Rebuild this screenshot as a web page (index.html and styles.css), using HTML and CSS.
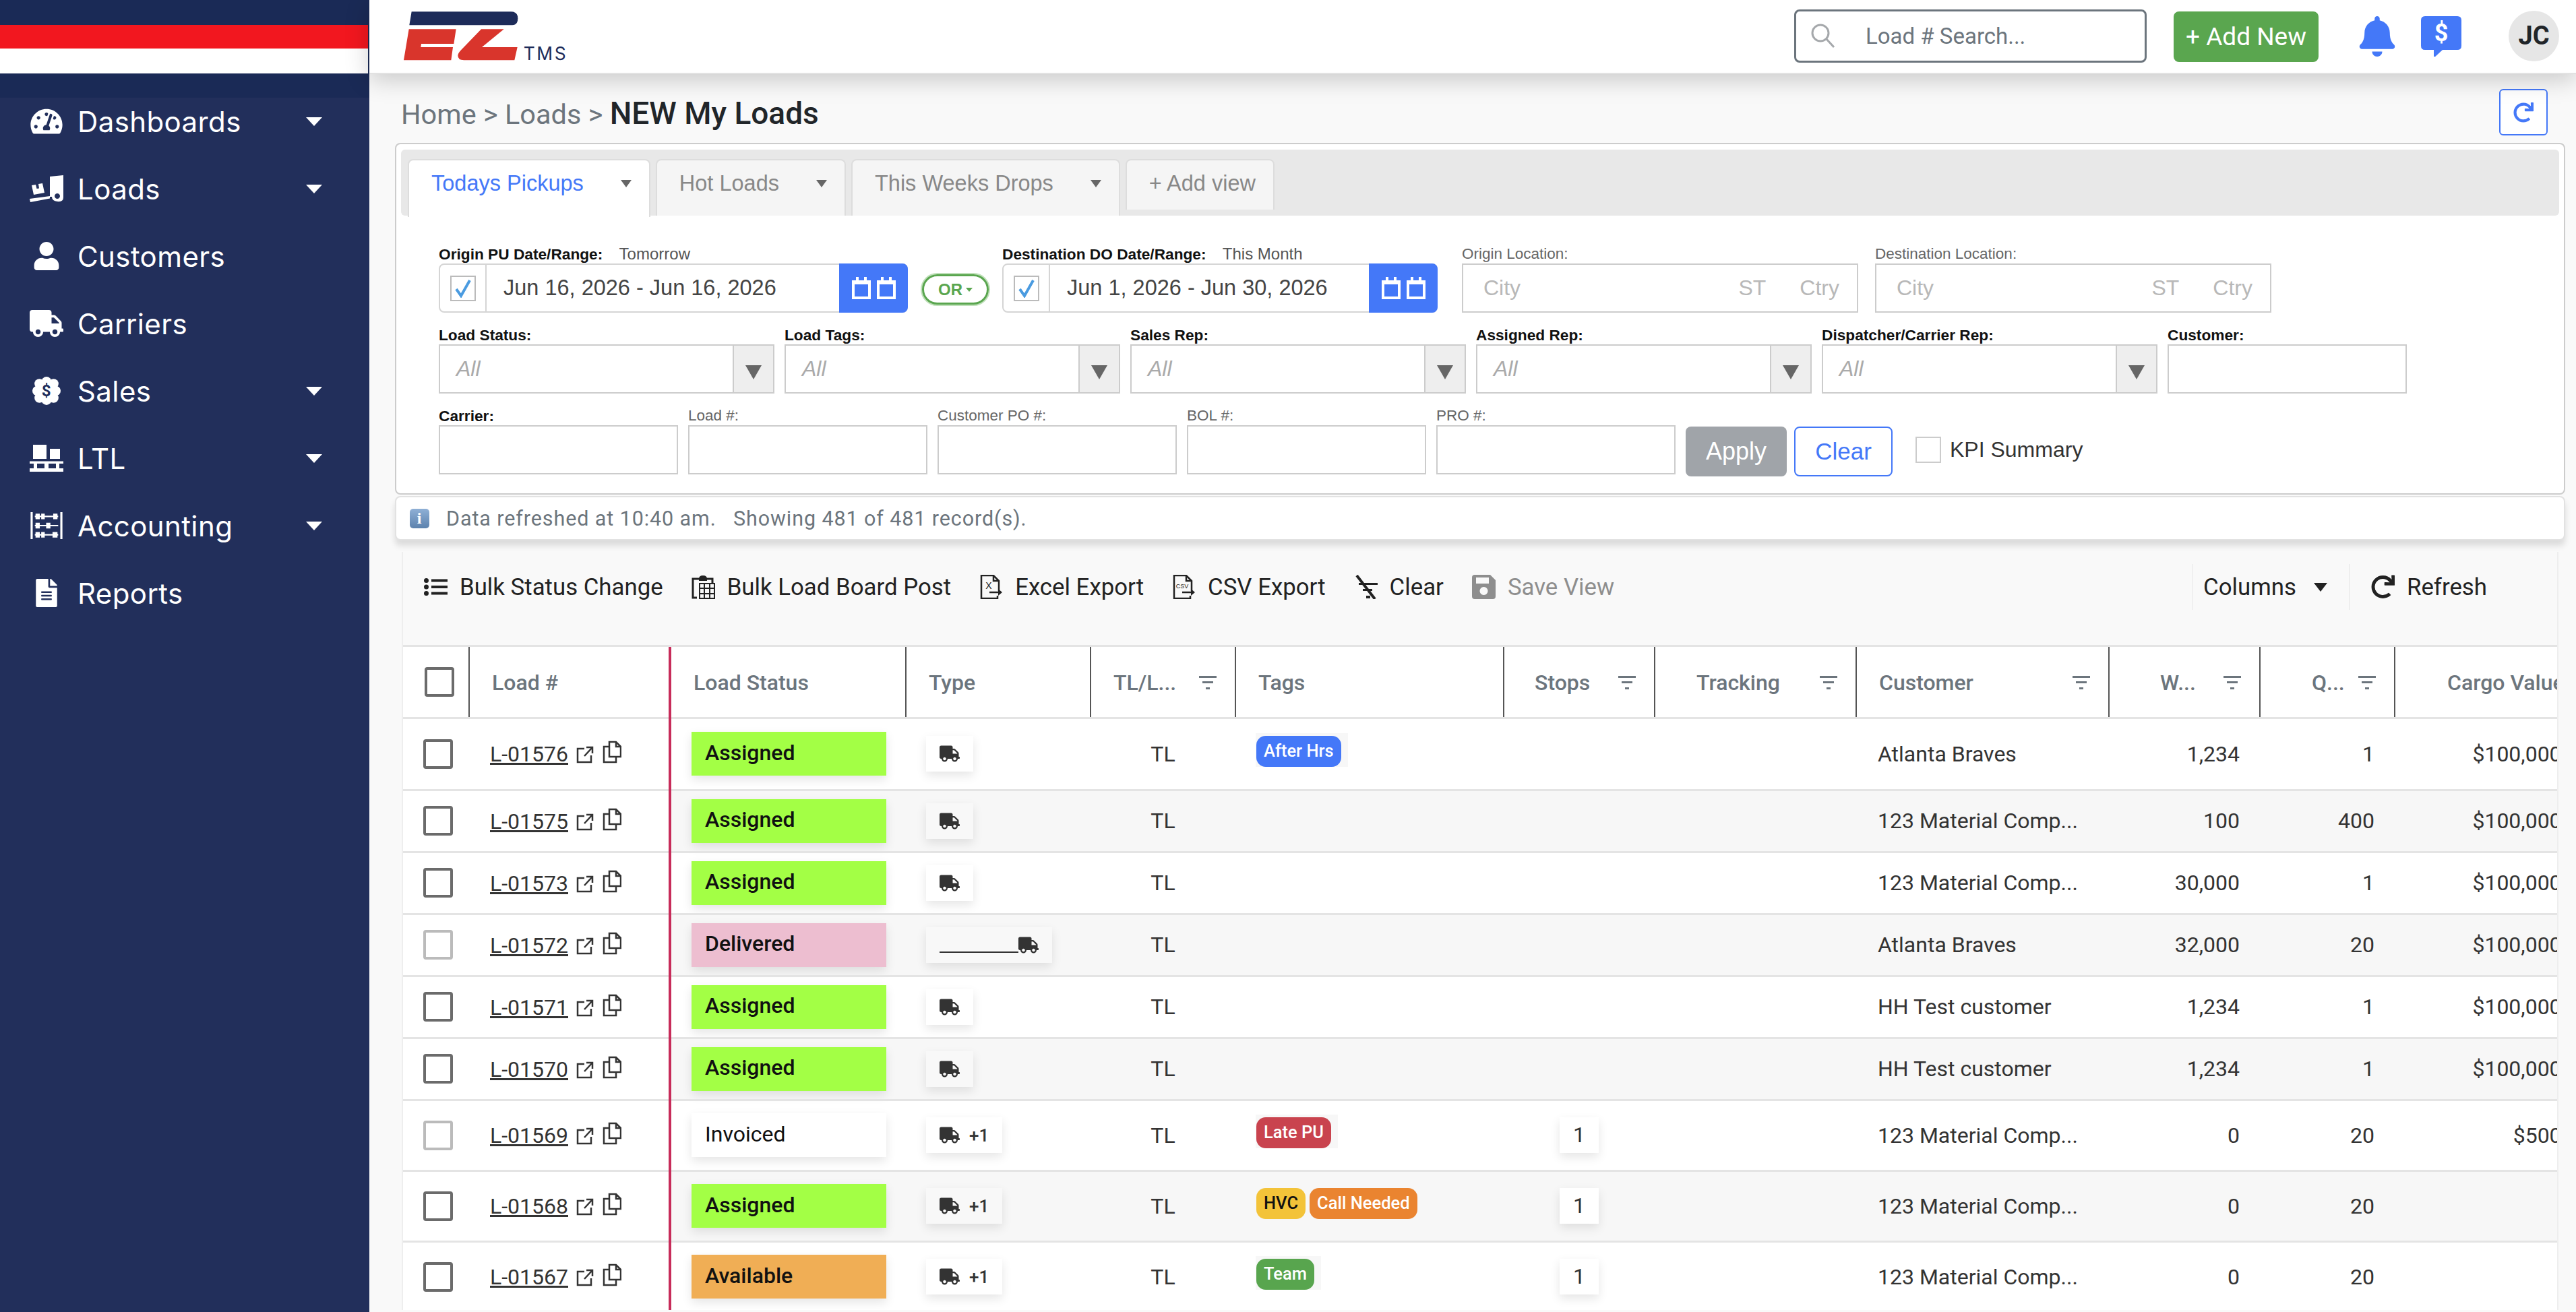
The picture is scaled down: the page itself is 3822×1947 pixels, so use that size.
FILE: index.html
```html
<!DOCTYPE html>
<html lang="en">
<head>
    <meta charset="UTF-8">
    <title>NEW My Loads</title>
    <link rel="stylesheet" href="styles.css">
</head>
<body>

<!-- shared icons -->
<svg class="sprite">
    <defs>
        <symbol id="i-gauge" viewBox="0 0 576 512"><path d="M288 32C128.94 32 0 160.94 0 320c0 52.8 14.25 102.26 39.06 144.8 5.61 9.62 16.3 15.2 27.44 15.2h443c11.14 0 21.83-5.58 27.44-15.2C561.75 422.26 576 372.8 576 320c0-159.06-128.94-288-288-288zm0 64c14.71 0 26.58 10.13 30.32 23.65-1.11 2.26-2.64 4.23-3.45 6.67l-9.22 27.67c-5.13 3.49-10.97 6.01-17.64 6.01-17.67 0-32-14.33-32-32S270.33 96 288 96zM96 384c-17.67 0-32-14.33-32-32s14.33-32 32-32 32 14.33 32 32-14.33 32-32 32zm48-160c-17.67 0-32-14.33-32-32s14.33-32 32-32 32 14.33 32 32-14.33 32-32 32zm246.77-72.41l-61.33 184C343.13 347.33 352 364.54 352 384c0 11.72-3.38 22.55-8.88 32H232.88c-5.5-9.45-8.88-20.28-8.88-32 0-33.94 26.5-61.43 59.9-63.59l61.34-184.01c4.17-12.56 17.73-19.45 30.36-15.17 12.57 4.19 19.35 17.79 15.17 30.36zm14.66 57.2l15.52-46.55c3.47-1.29 7.13-2.23 11.05-2.23 17.67 0 32 14.33 32 32s-14.33 32-32 32c-11.38-.01-20.89-6.28-26.57-15.22zM480 384c-17.67 0-32-14.33-32-32s14.33-32 32-32 32 14.33 32 32-14.33 32-32 32z"/></symbol>
        <symbol id="i-dolly" viewBox="0 0 50 40"><path fill-rule="evenodd" d="M30 2L50 0V33Q50 40 41 39Q33 38 33 32L30 32ZM41 27a4 4 0 1 0 .01 0Z"/><path d="M0 35L30 31V34.5L1 40Z"/><path d="M3 15L9 14L10.5 20L14 19.5L13 13L19 12L22 26L6 29Z"/></symbol>
        <symbol id="i-user" viewBox="0 0 448 512"><path d="M224 256c70.7 0 128-57.3 128-128S294.7 0 224 0 96 57.3 96 128s57.3 128 128 128zm89.6 32h-16.7c-22.2 10.2-46.9 16-72.9 16s-50.6-5.8-72.9-16h-16.7C60.2 288 0 348.2 0 422.4V464c0 26.5 21.5 48 48 48h352c26.5 0 48-21.5 48-48v-41.6c0-74.2-60.2-134.4-134.4-134.4z"/></symbol>
        <symbol id="i-truck" viewBox="0 0 640 512"><path d="M624 352h-16V243.9c0-12.7-5.1-24.9-14.1-33.9L494 110.1c-9-9-21.2-14.1-33.9-14.1H416V48c0-26.5-21.5-48-48-48H48C21.5 0 0 21.5 0 48v320c0 26.5 21.5 48 48 48h16c0 53 43 96 96 96s96-43 96-96h128c0 53 43 96 96 96s96-43 96-96h48c8.8 0 16-7.2 16-16v-32c0-8.8-7.2-16-16-16zM160 464c-26.5 0-48-21.5-48-48s21.5-48 48-48 48 21.5 48 48-21.5 48-48 48zm320 0c-26.5 0-48-21.5-48-48s21.5-48 48-48 48 21.5 48 48-21.5 48-48 48zm80-208H416V144h44.1l99.9 99.9V256z"/></symbol>
        <symbol id="i-pallet" viewBox="0 0 50 40"><path d="M5 0H25V21H5ZM30 6H45V21H30ZM0 24.5H50V28H0ZM0 35H50V40H0ZM6 28H11V35H6ZM22 28H28V35H22ZM39 28H44V35H39Z"/></symbol>
        <symbol id="i-abacus" viewBox="0 0 45 40"><path d="M0 1H3V39H0ZM42 1H45V39H42ZM6 6H39V8H6ZM6 19H39V21H6ZM6 32H39V34H6ZM7 3H13V11H7ZM15 3H20V11H15ZM32 3H38V11H32ZM7 16H13V24H7ZM22 16H28V24H22ZM7 29H13V37H7ZM15 29H20V37H15ZM31 29H38V37H31Z"/></symbol>
        <symbol id="i-file" viewBox="0 0 384 512"><path d="M224 136V0H24C10.7 0 0 10.7 0 24v464c0 13.3 10.7 24 24 24h336c13.3 0 24-10.7 24-24V160H248c-13.2 0-24-10.8-24-24zm64 236c0 6.6-5.4 12-12 12H108c-6.6 0-12-5.4-12-12v-8c0-6.6 5.4-12 12-12h168c6.6 0 12 5.4 12 12v8zm0-64c0 6.6-5.4 12-12 12H108c-6.6 0-12-5.4-12-12v-8c0-6.6 5.4-12 12-12h168c6.6 0 12 5.4 12 12v8zm0-72v8c0 6.6-5.4 12-12 12H108c-6.6 0-12-5.4-12-12v-8c0-6.6 5.4-12 12-12h168c6.6 0 12 5.4 12 12zm96-114.1v6.1H256V0h6.1c6.4 0 12.5 2.5 17 7l97.9 98c4.5 4.5 7 10.6 7 16.9z"/></symbol>
        <symbol id="i-redo" viewBox="0 0 512 512"><path d="M500.33 0h-47.41a12 12 0 0 0-12 12.57l4 82.76A247.42 247.42 0 0 0 256 8C119.34 8 7.9 119.53 8 256.19 8.1 393.07 119.1 504 256 504a247.1 247.1 0 0 0 166.18-63.91 12 12 0 0 0 .48-17.43l-34-34a12 12 0 0 0-16.38-.55A176 176 0 1 1 402.1 157.8l-101.53-4.87a12 12 0 0 0-12.57 12v47.41a12 12 0 0 0 12 12h200.33a12 12 0 0 0 12-12V12a12 12 0 0 0-12-12z"/></symbol>
        <symbol id="i-cal" viewBox="0 0 28 33"><path fill="none" stroke="#fff" stroke-width="4" d="M2 7H26V31H2Z"/><path fill="#fff" d="M6 0H10V7H6ZM18 0H22V7H18ZM0 5H28V11H0Z"/></symbol>
        <symbol id="i-check" viewBox="0 0 24 28"><path fill="none" stroke="#4a9be0" stroke-width="4" d="M2 15L9 25L22 2"/></symbol>
        <symbol id="i-ext" viewBox="0 0 26 26"><path fill="none" stroke="#333" stroke-width="2.5" d="M12 4H2V24H22V14M12 15L24 2M15 2H24V11"/></symbol>
        <symbol id="i-copy" viewBox="0 0 28 34"><path fill="none" stroke="#333" stroke-width="2.5" d="M10 2H20L27 9V24H10ZM20 2V9H27M10 9H2V32H20V24"/></symbol>
        <symbol id="i-filter" viewBox="0 0 26 20"><path d="M0 0H26V3H0ZM5 8H21V11H5ZM10 17H16V20H10Z"/></symbol>
    </defs>
</svg>

<aside class="sidebar">
    <div class="brand-strip">
        <div class="stripe-red"></div>
        <div class="stripe-white"></div>
    </div>
    <nav class="side-nav">
        <a class="nav-item"><svg class="nav-icon"><use href="#i-gauge"/></svg><span>Dashboards</span><i class="nav-caret"></i></a>
        <a class="nav-item"><svg class="nav-icon"><use href="#i-dolly"/></svg><span>Loads</span><i class="nav-caret"></i></a>
        <a class="nav-item"><svg class="nav-icon nav-icon-sm"><use href="#i-user"/></svg><span>Customers</span></a>
        <a class="nav-item"><svg class="nav-icon"><use href="#i-truck"/></svg><span>Carriers</span></a>
        <a class="nav-item">
            <svg class="nav-icon nav-icon-sm" viewBox="0 0 40 40">
                <circle cx="20" cy="7" r="7"/><circle cx="20" cy="33" r="7"/><circle cx="7" cy="20" r="7"/><circle cx="33" cy="20" r="7"/>
                <circle cx="10" cy="10" r="7"/><circle cx="30" cy="10" r="7"/><circle cx="10" cy="30" r="7"/><circle cx="30" cy="30" r="7"/><circle cx="20" cy="20" r="12"/>
                <text class="badge-dollar" x="20" y="28">$</text>
            </svg>
            <span>Sales</span><i class="nav-caret"></i>
        </a>
        <a class="nav-item"><svg class="nav-icon"><use href="#i-pallet"/></svg><span>LTL</span><i class="nav-caret"></i></a>
        <a class="nav-item"><svg class="nav-icon"><use href="#i-abacus"/></svg><span>Accounting</span><i class="nav-caret"></i></a>
        <a class="nav-item"><svg class="nav-icon nav-icon-sm"><use href="#i-file"/></svg><span>Reports</span></a>
    </nav>
</aside>

<main class="main">
    <header class="topbar">
        <svg class="logo" viewBox="0 0 840 300">
            <path fill="#1d2b59" d="M62 37H505Q535 37 535 67T510 97H52Z"/>
            <path fill="#d9352c" d="M50 115H260L250 180H105L103 195H246L238 253H27Z"/>
            <path fill="#d9352c" d="M372 115H473L375 195H533L520 253H295Q268 253 268 232Q268 222 285 205Z"/>
            <text class="logo-tms" x="560" y="253">TMS</text>
        </svg>
        <div class="search-box">
            <svg class="search-icon" viewBox="0 0 36 36"><circle cx="14" cy="14" r="12"/><path d="M23 23L34 35"/></svg>
            <span>Load # Search...</span>
        </div>
        <button class="btn-add">+ Add New</button>
        <svg class="top-icon bell" viewBox="0 0 448 512"><path d="M224 512c35.32 0 63.97-28.65 63.97-64H160.03c0 35.35 28.65 64 63.97 64zm215.39-149.71c-19.32-20.76-55.47-51.99-55.47-154.29 0-77.7-54.48-139.9-127.94-155.16V32c0-17.67-14.32-32-31.98-32s-31.98 14.33-31.98 32v20.84C118.56 68.1 64.08 130.3 64.08 208c0 102.3-36.15 133.53-55.47 154.29-6 6.45-8.66 14.16-8.61 21.71.11 16.4 12.98 32 32.1 32h383.8c19.12 0 32-15.6 32.1-32 .05-7.55-2.61-15.27-8.61-21.71z"/></svg>
        <svg class="top-icon chat" viewBox="0 0 60 60">
            <path d="M6 0H54Q60 0 60 6V44Q60 50 54 50H32L19 62V50H6Q0 50 0 44V6Q0 0 6 0Z"/>
            <text class="chat-dollar" x="30" y="37">$</text>
        </svg>
        <div class="avatar">JC</div>
    </header>

    <div class="content">
        <div class="page-head">
            <div class="crumbs">Home &gt; Loads &gt; <strong>NEW My Loads</strong></div>
            <button class="btn-refresh"><svg><use href="#i-redo"/></svg></button>
        </div>

        <section class="filter-panel">
            <div class="tabs">
                <div class="tab active">Todays Pickups<i class="tab-caret"></i></div>
                <div class="tab">Hot Loads<i class="tab-caret"></i></div>
                <div class="tab">This Weeks Drops<i class="tab-caret"></i></div>
                <div class="tab tab-add">+ Add view</div>
            </div>

            <div class="filter-rows">
                <div class="filter-row">
                    <div class="field w-date1">
                        <label class="lbl strong">Origin PU Date/Range: <em>Tomorrow</em></label>
                        <div class="date-group">
                            <div class="date-check"><span class="check-box"><svg><use href="#i-check"/></svg></span></div>
                            <div class="date-text">Jun 16, 2026 - Jun 16, 2026</div>
                            <div class="date-btn"><svg><use href="#i-cal"/></svg><svg><use href="#i-cal"/></svg></div>
                        </div>
                    </div>
                    <div class="or-pill">OR<i></i></div>
                    <div class="field w-date2">
                        <label class="lbl strong">Destination DO Date/Range: <em>This Month</em></label>
                        <div class="date-group">
                            <div class="date-check"><span class="check-box"><svg><use href="#i-check"/></svg></span></div>
                            <div class="date-text">Jun 1, 2026 - Jun 30, 2026</div>
                            <div class="date-btn"><svg><use href="#i-cal"/></svg><svg><use href="#i-cal"/></svg></div>
                        </div>
                    </div>
                    <div class="field w-loc loc-first">
                        <label class="lbl">Origin Location:</label>
                        <div class="ctrl loc-ctrl"><span class="loc-city">City</span><span class="loc-st">ST</span><span>Ctry</span></div>
                    </div>
                    <div class="field w-loc loc-second">
                        <label class="lbl">Destination Location:</label>
                        <div class="ctrl loc-ctrl"><span class="loc-city">City</span><span class="loc-st">ST</span><span>Ctry</span></div>
                    </div>
                </div>

                <div class="filter-row gap-15">
                    <div class="field w-select"><label class="lbl strong">Load Status:</label><div class="ctrl select-ctrl"><span>All</span><b></b></div></div>
                    <div class="field w-select"><label class="lbl strong">Load Tags:</label><div class="ctrl select-ctrl"><span>All</span><b></b></div></div>
                    <div class="field w-select"><label class="lbl strong">Sales Rep:</label><div class="ctrl select-ctrl"><span>All</span><b></b></div></div>
                    <div class="field w-select"><label class="lbl strong">Assigned Rep:</label><div class="ctrl select-ctrl"><span>All</span><b></b></div></div>
                    <div class="field w-select"><label class="lbl strong">Dispatcher/Carrier Rep:</label><div class="ctrl select-ctrl"><span>All</span><b></b></div></div>
                    <div class="field w-input"><label class="lbl strong">Customer:</label><div class="ctrl"></div></div>
                </div>

                <div class="filter-row gap-15">
                    <div class="field w-input"><label class="lbl strong">Carrier:</label><div class="ctrl"></div></div>
                    <div class="field w-input"><label class="lbl">Load #:</label><div class="ctrl"></div></div>
                    <div class="field w-input"><label class="lbl">Customer PO #:</label><div class="ctrl"></div></div>
                    <div class="field w-input"><label class="lbl">BOL #:</label><div class="ctrl"></div></div>
                    <div class="field w-input"><label class="lbl">PRO #:</label><div class="ctrl"></div></div>
                    <button class="btn-apply">Apply</button>
                    <button class="btn-clear">Clear</button>
                    <div class="kpi"><span class="kpi-box"></span>KPI Summary</div>
                </div>
            </div>
        </section>

        <div class="info-bar">
            <span class="info-icon">i</span>
            <span>Data refreshed at 10:40 am. &nbsp; Showing 481 of 481 record(s).</span>
        </div>

        <section class="grid-panel">
            <div class="toolbar">
                <a class="tool">
                    <svg class="tool-icon" viewBox="0 0 35 26"><circle cx="3.5" cy="3.5" r="3.5"/><circle cx="3.5" cy="13" r="3.5"/><circle cx="3.5" cy="22.5" r="3.5"/><path d="M11 1.5H35V5.5H11ZM11 11H35V15H11ZM11 20.5H35V24.5H11Z"/></svg>
                    Bulk Status Change
                </a>
                <a class="tool">
                    <svg class="tool-icon" viewBox="0 0 35 36"><path fill="none" stroke="#222" stroke-width="3" d="M8 34H2V6H31V12"/><path d="M11 6Q11 1 17 1T23 6V9H11Z"/><path fill="none" stroke="#222" stroke-width="2" d="M12 13H34V35H12ZM19 13V35M27 13V35M12 20H34M12 28H34"/></svg>
                    Bulk Load Board Post
                </a>
                <a class="tool">
                    <svg class="tool-icon" viewBox="0 0 33 36"><path fill="none" stroke="#222" stroke-width="2.5" d="M28 24V9L20 1H2V35H26V31M20 1V9H28M14 26H31"/><path d="M33 26L27 21V31Z"/><text class="file-tag x-tag" x="13" y="21">X</text></svg>
                    Excel Export
                </a>
                <a class="tool">
                    <svg class="tool-icon" viewBox="0 0 33 36"><path fill="none" stroke="#222" stroke-width="2.5" d="M28 24V9L20 1H2V35H26V31M20 1V9H28M14 26H31"/><path d="M33 26L27 21V31Z"/><text class="file-tag" x="14" y="20">CSV</text></svg>
                    CSV Export
                </a>
                <a class="tool">
                    <svg class="tool-icon" viewBox="0 0 35 36"><path d="M7 12H35V15H7ZM13 21H27V24H13ZM18 31H24V35H18Z"/><path fill="none" stroke="#222" stroke-width="4" d="M4 1L31 36"/></svg>
                    Clear
                </a>
                <a class="tool tool-off">
                    <svg class="tool-icon" viewBox="0 0 35 36"><path fill="#8e8e8e" fill-rule="evenodd" d="M4 0H27L35 8V32Q35 36 31 36H4Q0 36 0 32V4Q0 0 4 0ZM6 4V13H25V4ZM17.5 18a6 6 0 1 0 .01 0Z"/></svg>
                    Save View
                </a>
                <div class="tool-right">
                    <a class="tool tool-columns">Columns<i class="columns-caret"></i></a>
                    <a class="tool tool-refresh"><svg class="tool-icon"><use href="#i-redo"/></svg>Refresh</a>
                </div>
            </div>

            <div class="table-clip">
                <table class="loads">
                    <colgroup>
                        <col class="c-check"><col class="c-load"><col class="c-status"><col class="c-type"><col class="c-tl"><col class="c-tags"><col class="c-stops"><col class="c-track"><col class="c-cust"><col class="c-w"><col class="c-q"><col class="c-cargo">
                    </colgroup>
                    <thead>
                        <tr>
                            <th class="cell-check"><span class="cb head-cb"></span></th>
                            <th class="frozen"><div class="th">Load #</div></th>
                            <th><div class="th">Load Status</div></th>
                            <th><div class="th">Type</div></th>
                            <th><div class="th">TL/L...<svg><use href="#i-filter"/></svg></div></th>
                            <th><div class="th">Tags</div></th>
                            <th><div class="th th-stops">Stops<svg><use href="#i-filter"/></svg></div></th>
                            <th><div class="th th-track">Tracking<svg><use href="#i-filter"/></svg></div></th>
                            <th><div class="th">Customer<svg><use href="#i-filter"/></svg></div></th>
                            <th><div class="th th-w">W...<svg><use href="#i-filter"/></svg></div></th>
                            <th><div class="th th-q">Q...<svg><use href="#i-filter"/></svg></div></th>
                            <th><div class="th th-cargo">Cargo Value</div></th>
                        </tr>
                    </thead>
                    <tbody>
                        <tr class="row-tall row-first">
                            <td class="cell-check"><span class="cb"></span></td>
                            <td class="frozen"><a class="load-no">L-01576</a><svg class="ic-ext"><use href="#i-ext"/></svg><svg class="ic-copy"><use href="#i-copy"/></svg></td>
                            <td><div class="status st-assigned">Assigned</div></td>
                            <td><span class="chip"><svg><use href="#i-truck"/></svg></span></td>
                            <td class="center">TL</td>
                            <td><div class="tags"><span class="tag tag-blue">After Hrs</span></div></td>
                            <td></td><td></td>
                            <td>Atlanta Braves</td>
                            <td class="right">1,234</td><td class="right">1</td><td class="right">$100,000.00</td>
                        </tr>
                        <tr>
                            <td class="cell-check"><span class="cb"></span></td>
                            <td class="frozen"><a class="load-no">L-01575</a><svg class="ic-ext"><use href="#i-ext"/></svg><svg class="ic-copy"><use href="#i-copy"/></svg></td>
                            <td><div class="status st-assigned">Assigned</div></td>
                            <td><span class="chip"><svg><use href="#i-truck"/></svg></span></td>
                            <td class="center">TL</td>
                            <td></td><td></td><td></td>
                            <td>123 Material Comp...</td>
                            <td class="right">100</td><td class="right">400</td><td class="right">$100,000.00</td>
                        </tr>
                        <tr>
                            <td class="cell-check"><span class="cb"></span></td>
                            <td class="frozen"><a class="load-no">L-01573</a><svg class="ic-ext"><use href="#i-ext"/></svg><svg class="ic-copy"><use href="#i-copy"/></svg></td>
                            <td><div class="status st-assigned">Assigned</div></td>
                            <td><span class="chip"><svg><use href="#i-truck"/></svg></span></td>
                            <td class="center">TL</td>
                            <td></td><td></td><td></td>
                            <td>123 Material Comp...</td>
                            <td class="right">30,000</td><td class="right">1</td><td class="right">$100,000.00</td>
                        </tr>
                        <tr>
                            <td class="cell-check"><span class="cb cb-off"></span></td>
                            <td class="frozen"><a class="load-no">L-01572</a><svg class="ic-ext"><use href="#i-ext"/></svg><svg class="ic-copy"><use href="#i-copy"/></svg></td>
                            <td><div class="status st-delivered">Delivered</div></td>
                            <td><span class="chip"><i class="chip-line"></i><svg><use href="#i-truck"/></svg></span></td>
                            <td class="center">TL</td>
                            <td></td><td></td><td></td>
                            <td>Atlanta Braves</td>
                            <td class="right">32,000</td><td class="right">20</td><td class="right">$100,000.00</td>
                        </tr>
                        <tr>
                            <td class="cell-check"><span class="cb"></span></td>
                            <td class="frozen"><a class="load-no">L-01571</a><svg class="ic-ext"><use href="#i-ext"/></svg><svg class="ic-copy"><use href="#i-copy"/></svg></td>
                            <td><div class="status st-assigned">Assigned</div></td>
                            <td><span class="chip"><svg><use href="#i-truck"/></svg></span></td>
                            <td class="center">TL</td>
                            <td></td><td></td><td></td>
                            <td>HH Test customer</td>
                            <td class="right">1,234</td><td class="right">1</td><td class="right">$100,000.00</td>
                        </tr>
                        <tr>
                            <td class="cell-check"><span class="cb"></span></td>
                            <td class="frozen"><a class="load-no">L-01570</a><svg class="ic-ext"><use href="#i-ext"/></svg><svg class="ic-copy"><use href="#i-copy"/></svg></td>
                            <td><div class="status st-assigned">Assigned</div></td>
                            <td><span class="chip"><svg><use href="#i-truck"/></svg></span></td>
                            <td class="center">TL</td>
                            <td></td><td></td><td></td>
                            <td>HH Test customer</td>
                            <td class="right">1,234</td><td class="right">1</td><td class="right">$100,000.00</td>
                        </tr>
                        <tr class="row-tall">
                            <td class="cell-check"><span class="cb cb-off"></span></td>
                            <td class="frozen"><a class="load-no">L-01569</a><svg class="ic-ext"><use href="#i-ext"/></svg><svg class="ic-copy"><use href="#i-copy"/></svg></td>
                            <td><div class="status st-invoiced">Invoiced</div></td>
                            <td><span class="chip"><svg><use href="#i-truck"/></svg><b>+1</b></span></td>
                            <td class="center">TL</td>
                            <td><div class="tags"><span class="tag tag-red">Late PU</span></div></td>
                            <td class="center"><span class="stop-chip">1</span></td><td></td>
                            <td>123 Material Comp...</td>
                            <td class="right">0</td><td class="right">20</td><td class="right">$500.00</td>
                        </tr>
                        <tr class="row-tall">
                            <td class="cell-check"><span class="cb"></span></td>
                            <td class="frozen"><a class="load-no">L-01568</a><svg class="ic-ext"><use href="#i-ext"/></svg><svg class="ic-copy"><use href="#i-copy"/></svg></td>
                            <td><div class="status st-assigned">Assigned</div></td>
                            <td><span class="chip"><svg><use href="#i-truck"/></svg><b>+1</b></span></td>
                            <td class="center">TL</td>
                            <td><div class="tags"><span class="tag tag-yellow">HVC</span><span class="tag tag-orange">Call Needed</span></div></td>
                            <td class="center"><span class="stop-chip">1</span></td><td></td>
                            <td>123 Material Comp...</td>
                            <td class="right">0</td><td class="right">20</td><td class="right"></td>
                        </tr>
                        <tr class="row-tall">
                            <td class="cell-check"><span class="cb"></span></td>
                            <td class="frozen"><a class="load-no">L-01567</a><svg class="ic-ext"><use href="#i-ext"/></svg><svg class="ic-copy"><use href="#i-copy"/></svg></td>
                            <td><div class="status st-available">Available</div></td>
                            <td><span class="chip"><svg><use href="#i-truck"/></svg><b>+1</b></span></td>
                            <td class="center">TL</td>
                            <td><div class="tags"><span class="tag tag-green">Team</span></div></td>
                            <td class="center"><span class="stop-chip">1</span></td><td></td>
                            <td>123 Material Comp...</td>
                            <td class="right">0</td><td class="right">20</td><td class="right"></td>
                        </tr>
                    </tbody>
                </table>
            </div>
        </section>
    </div>
</main>

</body>
</html>
```

FILE: styles.css
```css
/* EZ TMS loads board */
* {
    box-sizing: border-box;
}
body {
    display: flex;
    height: 100vh;
    margin: 0;
    overflow: hidden;
    font-family: Roboto, sans-serif;
    font-size: 32px;
    color: #333;
    background-color: #f9f9f9;
}
.sprite {
    display: none;
}
button {
    font: inherit;
    cursor: pointer;
}

/* sidebar */
.sidebar {
    flex: none;
    width: 548px;
    background-color: #222f5b;
}
.brand-strip {
    height: 145px;
    padding: 37px 2px 36px 0;
    background-color: #1a2a56;
}
.stripe-red {
    height: 35px;
    background-color: #f2171f;
}
.stripe-white {
    height: 37px;
    background-color: #fff;
}
.side-nav {
    margin-top: -15px;
}
.nav-item {
    display: flex;
    align-items: center;
    height: 100px;
    padding: 0 70px 0 44px;
    color: #fff;
    font-family: Inter, sans-serif;
    font-size: 42px;
    letter-spacing: 0.4px;
}
.nav-icon {
    flex: none;
    width: 50px;
    height: 42px;
    margin-right: 21px;
    fill: #fff;
}
.nav-caret {
    margin-left: auto;
    border-left: 12px solid transparent;
    border-right: 12px solid transparent;
    border-top: 13px solid #fff;
}
.badge-dollar {
    font: 700 23px Roboto, sans-serif;
    text-anchor: middle;
    fill: #222f5b;
}

/* top bar */
.main {
    flex: 1;
    min-width: 0;
    display: flex;
    flex-direction: column;
}
.topbar {
    position: relative;
    z-index: 2;
    flex: none;
    display: flex;
    align-items: center;
    height: 110px;
    padding-left: 42px;
    background-color: #fff;
    border-bottom: 2px solid #e2e2e2;
    box-shadow: 0 8px 34px rgba(0, 0, 0, 0.2);
}
.logo {
    flex: none;
    width: 280px;
    height: 100px;
    margin-top: 2px;
    margin-right: auto;
}
.logo-tms {
    font: 400 79px Inter, sans-serif;
    fill: #1d2b59;
    letter-spacing: 8px;
}
.search-box {
    display: flex;
    align-items: center;
    width: 523px;
    height: 79px;
    margin-bottom: 2px;
    padding-left: 22px;
    border: 3px solid #6c757d;
    border-radius: 8px;
    font-size: 33px;
    color: #6c757d;
}
.search-icon {
    width: 36px;
    height: 36px;
    margin-right: 45px;
    fill: none;
    stroke: #a5a8ab;
    stroke-width: 3;
}
.btn-add {
    width: 215px;
    height: 75px;
    margin: 0 57px 0 40px;
    padding: 0;
    border: none;
    border-radius: 8px;
    font-size: 37px;
    color: #fff;
    background-color: #5aa64f;
}
.top-icon {
    flex: none;
    width: 60px;
    height: 60px;
    fill: #4478f8;
}
.bell {
    margin-right: 35px;
}
.chat-dollar {
    font: 700 36px Roboto, sans-serif;
    text-anchor: middle;
    fill: #fff;
}
.avatar {
    display: flex;
    align-items: center;
    justify-content: center;
    width: 75px;
    height: 75px;
    margin: 0 25px 2px 70px;
    border-radius: 50%;
    font-size: 38px;
    font-weight: 700;
    color: #212529;
    background-color: #e6e6e6;
}

/* page heading */
.content {
    flex: 1;
    min-height: 0;
    display: flex;
    flex-direction: column;
    padding: 0 16px 3px 38px;
}
.page-head {
    flex: none;
    display: flex;
    align-items: center;
    justify-content: space-between;
    height: 102px;
    padding: 22px 26px 11px 9px;
}
.crumbs {
    padding-top: 3px;
    font-size: 41.5px;
    color: #6c757d;
}
.crumbs strong {
    font-size: 46px;
    font-weight: 500;
    color: #212529;
}
.btn-refresh {
    display: flex;
    align-items: center;
    justify-content: center;
    width: 72px;
    height: 69px;
    padding: 0;
    border: 2px solid #4478f8;
    border-radius: 6px;
    background-color: #fff;
}
.btn-refresh svg {
    width: 30px;
    height: 32px;
    fill: #4478f8;
}

/* filter panel */
.filter-panel {
    flex: none;
    height: 522px;
    border: 2px solid #ccc;
    border-radius: 8px;
    font-family: "Liberation Sans", Arial, sans-serif;
    background-color: #fff;
}
.tabs {
    display: flex;
    gap: 8px;
    height: 98px;
    margin: 8px 7px 0;
    padding: 14px 0 0 10px;
    border-radius: 6px;
    font-size: 32.5px;
    background-color: #e8e8e8;
}
.tab {
    display: flex;
    align-items: center;
    gap: 55px;
    height: 84px;
    padding: 0 26px 14px 33px;
    border: 2px solid #ddd;
    border-bottom: none;
    border-radius: 8px 8px 0 0;
    color: #888;
    background-color: #f5f5f5;
}
.tab.active {
    height: 86px;
    padding-bottom: 16px;
    color: #4478f8;
    background-color: #fff;
}
.tab-add {
    height: 75px;
    padding-bottom: 5px;
}
.tab-caret {
    border-left: 8px solid transparent;
    border-right: 8px solid transparent;
    border-top: 11px solid #666;
}
.filter-rows {
    display: flex;
    flex-direction: column;
    gap: 20px;
    padding: 44px 0 0 63px;
}
.filter-row {
    display: flex;
    align-items: flex-end;
    height: 100px;
}
.gap-15 {
    gap: 15px;
}
.lbl {
    display: block;
    height: 27px;
    font-size: 22.5px;
    line-height: 26px;
    white-space: nowrap;
    color: #666;
}
.lbl.strong {
    font-size: 22.7px;
    font-weight: 700;
    color: #111;
}
.lbl em {
    margin-left: 18px;
    font-size: 24px;
    font-style: normal;
    font-weight: 400;
    color: #555;
}
.w-date1 {
    width: 696px;
}
.w-date2 {
    width: 646px;
}
.w-loc {
    width: 588px;
}
.loc-first {
    margin-left: 36px;
}
.loc-second {
    margin-left: 25px;
}
.w-select {
    width: 498px;
}
.w-input {
    width: 355px;
}
.date-group {
    display: flex;
    height: 73px;
    border: 2px solid #d5d5d5;
    border-radius: 8px;
}
.date-check {
    display: flex;
    align-items: center;
    justify-content: center;
    width: 69px;
    border-right: 2px solid #d5d5d5;
}
.check-box {
    display: flex;
    align-items: center;
    justify-content: center;
    width: 38px;
    height: 38px;
    border: 2px solid #bbb;
}
.check-box svg {
    width: 24px;
    height: 28px;
}
.date-text {
    flex: 1;
    padding-left: 25px;
    font-size: 32.5px;
    line-height: 68px;
    white-space: nowrap;
    color: #444;
}
.date-btn {
    display: flex;
    align-items: center;
    justify-content: center;
    gap: 9px;
    width: 102px;
    margin: -2px -2px -2px 0;
    border-radius: 0 8px 8px 0;
    background-color: #4478f8;
}
.date-btn svg {
    width: 28px;
    height: 33px;
}
.or-pill {
    display: flex;
    align-items: center;
    justify-content: center;
    gap: 5px;
    width: 99px;
    height: 45px;
    margin: 0 20px 12px 21px;
    border: 3px solid #5aa64f;
    border-radius: 23px;
    box-shadow: 0 0 0 2px #bfe0b9;
    font-size: 24px;
    font-weight: 700;
    color: #5aa64f;
}
.or-pill i {
    border-left: 5px solid transparent;
    border-right: 5px solid transparent;
    border-top: 6px solid #5aa64f;
}
.ctrl {
    height: 73px;
    border: 2px solid #ccc;
    background-color: #fff;
}
.loc-ctrl {
    display: flex;
    align-items: center;
    padding: 0 26px 0 30px;
    color: #b8b8b8;
}
.loc-city {
    flex: 1;
}
.loc-st {
    margin-right: 50px;
}
.select-ctrl {
    display: flex;
    align-items: center;
    justify-content: space-between;
    padding-left: 24px;
    font-style: italic;
    color: #aaa;
}
.select-ctrl b {
    position: relative;
    width: 60px;
    height: 100%;
    border-left: 2px solid #ccc;
    background-color: #eee;
}
.select-ctrl b::after {
    content: "";
    position: absolute;
    left: 17px;
    top: 29px;
    border-left: 12px solid transparent;
    border-right: 12px solid transparent;
    border-top: 21px solid #666;
}
.btn-apply {
    width: 150px;
    height: 74px;
    margin-bottom: -3px;
    padding: 0;
    border: none;
    border-radius: 8px;
    font-size: 36px;
    color: #fff;
    background-color: #a0a4a9;
}
.btn-clear {
    width: 146px;
    height: 74px;
    margin: 0 0 -3px -4px;
    padding: 0;
    border: 2px solid #4478f8;
    border-radius: 8px;
    font-size: 35px;
    color: #4478f8;
    background-color: #fff;
}
.kpi {
    display: flex;
    align-items: center;
    margin-left: 19px;
    height: 73px;
    white-space: nowrap;
}
.kpi-box {
    width: 38px;
    height: 39px;
    margin-right: 13px;
    border: 2px solid #ccc;
}

/* info bar */
.info-bar {
    flex: none;
    display: flex;
    align-items: center;
    height: 66px;
    margin-top: 2px;
    padding-left: 20px;
    border: 2px solid #e2e2e2;
    border-radius: 8px;
    font-size: 30.5px;
    letter-spacing: 0.9px;
    color: #6c757d;
    background-color: #fff;
    box-shadow: 0 8px 10px rgba(0, 0, 0, 0.12);
}
.info-icon {
    width: 29px;
    height: 29px;
    margin-right: 25px;
    border-radius: 5px;
    font: 700 24px/29px "Liberation Serif", serif;
    text-align: center;
    color: #fff;
    background: linear-gradient(#8fb0d6, #5c82ad);
}

/* table panel */
.grid-panel {
    flex: 1;
    min-height: 0;
    display: flex;
    flex-direction: column;
    margin: 17px 10px 0;
    border-left: 2px solid #eee;
    border-right: 2px solid #eee;
    background-color: #fff;
}
.toolbar {
    flex: none;
    display: flex;
    align-items: flex-start;
    gap: 42px;
    height: 141px;
    padding: 18px 0 0 31px;
    border-bottom: 3px solid #e4e4e4;
    font-size: 34.8px;
    background-color: #f9f9f9;
}
.tool {
    display: flex;
    align-items: center;
    gap: 18px;
    height: 68px;
    white-space: nowrap;
    color: #222;
}
.tool-icon {
    flex: none;
    width: 35px;
    height: 36px;
    fill: #222;
}
.tool-off {
    color: #8e8e8e;
}
.file-tag {
    font: 400 9px "Liberation Sans", sans-serif;
    text-anchor: middle;
    fill: #222;
}
.x-tag {
    font-size: 14px;
}
.tool-right {
    display: flex;
    margin-left: auto;
    padding-right: 104px;
}
.tool-columns {
    gap: 26px;
    padding: 0 32px 0 16px;
    border-left: 1px solid #e6e6e6;
}
.columns-caret {
    border-left: 10px solid transparent;
    border-right: 10px solid transparent;
    border-top: 13px solid #222;
}
.tool-refresh {
    padding-left: 32px;
    border-left: 1px solid #e6e6e6;
}

/* table */
.table-clip {
    flex: 1;
    min-height: 0;
    overflow: hidden;
}
.loads {
    table-layout: fixed;
    width: 3277px;
    border-collapse: collapse;
}
.c-check { width: 98px; }
.c-load { width: 298px; }
.c-status { width: 350px; }
.c-type { width: 274px; }
.c-tl { width: 215px; }
.c-tags { width: 398px; }
.c-stops { width: 224px; }
.c-track { width: 299px; }
.c-cust { width: 375px; }
.c-w { width: 224px; }
.c-q { width: 200px; }
.c-cargo { width: 322px; }

.loads th {
    height: 105px;
    padding: 2px 0 0;
    font-weight: 500;
    text-align: left;
    color: #6c757d;
    border-bottom: 3px solid #e4e4e4;
    border-right: 2px solid #555;
}
.th {
    display: flex;
    align-items: center;
    padding: 0 27px 0 33px;
}
.th svg {
    width: 26px;
    height: 20px;
    margin-left: auto;
    fill: #6c757d;
}
.th-stops { padding-left: 45px; }
.th-track { padding-left: 61px; }
.th-w { padding-left: 75px; }
.th-q { padding-left: 76px; }
.th-cargo { padding-left: 77px; }

.loads td {
    height: 92px;
    padding: 0 30px;
    white-space: nowrap;
    border-bottom: 3px solid #e4e4e4;
}
.loads td:nth-child(9) {
    padding-left: 32px;
}
.loads tbody tr:nth-child(even) td {
    background-color: #f7f7f7;
}
.loads tbody tr .frozen,
.loads tbody tr .cell-check,
.loads tbody tr:nth-child(even) .frozen,
.loads tbody tr:nth-child(even) .cell-check {
    background-color: #fff;
}
.loads .row-tall td {
    height: 105px;
}
.loads .row-first td {
    height: 107px;
}
.loads th.frozen,
.loads td.frozen {
    border-right: 4px solid #c72c5a;
}
.loads td.frozen {
    padding-left: 31px;
}
.loads .cell-check {
    padding: 0 0 0 30px;
}
.loads th.cell-check {
    padding-left: 32px;
}
.loads .center {
    padding: 0;
    text-align: center;
}
.loads .right {
    text-align: right;
}
.cb {
    display: block;
    width: 44px;
    height: 44px;
    border: 4px solid #6b6b6b;
    border-radius: 4px;
    background-color: #fff;
}
.cb-off {
    border-color: #bbb;
}
.load-no {
    text-decoration: underline;
}
.ic-ext {
    width: 26px;
    height: 26px;
    margin-left: 12px;
    vertical-align: -3px;
}
.ic-copy {
    width: 28px;
    height: 34px;
    margin-left: 13px;
    vertical-align: -3px;
}
.status {
    display: flex;
    align-items: center;
    width: 289px;
    height: 65px;
    padding-bottom: 4px;
    padding-left: 20px;
    font-weight: 500;
    color: #111;
    box-shadow: 0 6px 14px rgba(0, 0, 0, 0.1);
}
.st-assigned { background-color: #a3ff45; }
.st-delivered { background-color: #edbed0; }
.st-invoiced { font-weight: 400; background-color: #fff; }
.st-available { background-color: #f0ae55; }
.chip {
    display: inline-flex;
    align-items: center;
    height: 53px;
    padding: 0 20px;
    vertical-align: -7px;
    background-color: #fff;
    box-shadow: 0 6px 14px rgba(0, 0, 0, 0.1);
}
tr:nth-child(even) .chip {
    background-color: #f8f8f8;
}
.chip svg {
    width: 30px;
    height: 25px;
    fill: #333;
}
.chip b {
    margin-left: 14px;
    font-size: 26px;
    font-weight: 500;
}
.chip-line {
    width: 117px;
    height: 2px;
    margin-top: 21px;
    background-color: #333;
}
.tags {
    display: inline-flex;
    gap: 6px;
    margin-bottom: 12px;
    padding: 4px 10px 0 1px;
    background-color: #f7f7f7;
}
.tag {
    padding: 0 11px;
    height: 46px;
    border-radius: 14px;
    font-size: 25.5px;
    font-weight: 500;
    line-height: 44px;
    color: #fff;
}
.tag-blue { background-color: #4478f8; }
.tag-red { background-color: #c9434e; }
.tag-yellow { color: #111; background-color: #f3c339; }
.tag-orange { background-color: #ea8430; }
.tag-green { background-color: #58a54e; }
.stop-chip {
    display: inline-block;
    width: 58px;
    height: 53px;
    line-height: 53px;
    background-color: #fff;
    box-shadow: 0 6px 14px rgba(0, 0, 0, 0.1);
}
```
